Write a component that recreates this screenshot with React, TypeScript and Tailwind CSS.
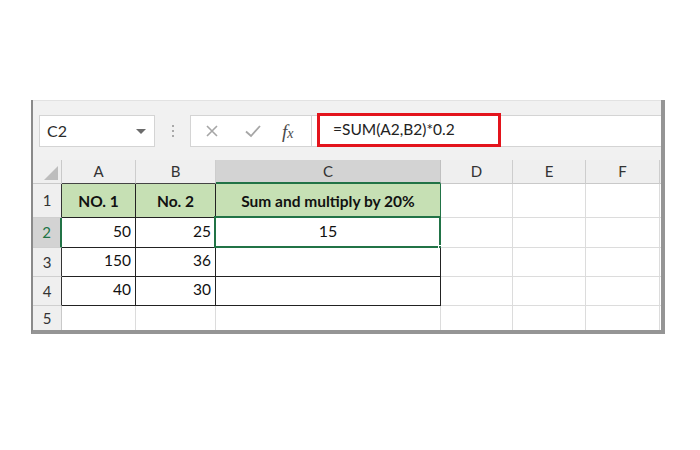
import { ReactNode } from 'react';

const cols = ['A', 'B', 'C', 'D', 'E', 'F'];
const widths = ['w-[74px]', 'w-[80px]', 'w-[225px]', 'w-[72px]', 'w-[73px]', 'w-[74px]'];
const heights = ['h-[34px]', 'h-[30px]', 'h-[29px]', 'h-[29px]', 'h-[25px]'];

type Cell = { text?: string; bold?: boolean; align?: 'left' | 'center' | 'right' };

const data: Cell[][] = [
  [
    { text: 'NO. 1', bold: true, align: 'center' },
    { text: 'No. 2', bold: true, align: 'center' },
    { text: 'Sum and multiply by 20%', bold: true, align: 'center' },
  ],
  [{ text: '50', align: 'right' }, { text: '25', align: 'right' }, { text: '15', align: 'center' }],
  [{ text: '150', align: 'right' }, { text: '36', align: 'right' }, {}],
  [{ text: '40', align: 'right' }, { text: '30', align: 'right' }, {}],
  [{}, {}, {}],
];

function FormulaBar() {
  return (
    <div className="h-[60px] bg-[#f1f1f1] border-t border-[#e2e2e2] flex items-start pt-[14px]">
      {/* Name box */}
      <div className="shrink-0 ml-[6px] w-[116px] h-[32px] bg-white border border-[#d4d4d4] flex items-center justify-between pl-[7px] pr-[8px]">
        <span className="text-[16px] text-[#2b2b2b]">C2</span>
        <span className="w-0 h-0 border-l-[5px] border-r-[5px] border-t-[5px] border-l-transparent border-r-transparent border-t-[#6b6b6b]" />
      </div>
      {/* Grip dots */}
      <div className="shrink-0 w-[35px] h-[32px] flex flex-col items-center justify-center gap-[3px]">
        <span className="w-[2px] h-[2px] bg-[#a9a9a9]" />
        <span className="w-[2px] h-[2px] bg-[#a9a9a9]" />
        <span className="w-[2px] h-[2px] bg-[#a9a9a9]" />
      </div>
      {/* Cancel / enter / fx */}
      <div className="shrink-0 w-[122px] h-[32px] bg-white border border-[#d4d4d4] flex items-center">
        <svg width="16" height="16" viewBox="0 0 16 16" className="ml-[13px]">
          <path d="M3 3 L13 13 M13 3 L3 13" stroke="#a6a6a6" strokeWidth="1.6" />
        </svg>
        <svg width="18" height="16" viewBox="0 0 18 16" className="ml-[24px]">
          <path d="M2 8.5 L7 13 L16 3" stroke="#a6a6a6" strokeWidth="1.8" fill="none" />
        </svg>
        <span
          className="ml-[20px] text-[19px] italic text-[#4a4a4a] leading-none"
          style={{ fontFamily: '"Liberation Serif", serif' }}
        >
          f<span className="text-[14px]">x</span>
        </span>
      </div>
      {/* Formula input */}
      <div className="flex-1 h-[32px] bg-white border-y border-[#d4d4d4]">
        <div className="ml-[5px] -mt-[3px] w-[184px] h-[34px] border-[3px] border-[#e3141c] flex items-center pl-[13px]">
          <span className="text-[15.5px] text-[#222]">=SUM(A2,B2)*0.2</span>
        </div>
      </div>
    </div>
  );
}

function HeaderRow() {
  return (
    <div className="flex h-[24px]">
      <div className="w-[29px] bg-[#efefef] border-r border-b border-[#c9c9c9] flex items-end justify-end pr-[3px] pb-[3px]">
        <svg width="14" height="14" viewBox="0 0 14 14">
          <path d="M14 0 L14 14 L0 14 Z" fill="#bdbdbd" />
        </svg>
      </div>
      {cols.map((c, i) => {
        const sel = c === 'C';
        const dark = c === 'A' || c === 'B';
        return (
          <div
            key={c}
            className={`${widths[i]} flex items-center justify-center text-[15px] text-[#333] border-r ${
              sel
                ? 'bg-[#d3d3d3] border-r-[#c0c0c0] border-b-2 border-b-[#217346]'
                : `bg-[#efefef] border-r-[#cdcdcd] border-b ${dark ? 'border-b-[#444]' : 'border-b-[#c9c9c9]'}`
            }`}
          >
            {c}
          </div>
        );
      })}
      <div className="flex-1 bg-[#efefef] border-b border-[#c9c9c9]" />
    </div>
  );
}

function DataCell({ cell, col, row }: { cell: Cell; col: number; row: number }) {
  const inRange = col < 3 && row < 4;
  const isC1 = col === 2 && row === 0;
  const isC2 = col === 2 && row === 1;
  const fill = row === 0 && col < 3 ? 'bg-[#c6e0b4]' : 'bg-white';
  const borderR = isC1
    ? 'border-r-[#217346]'
    : inRange
    ? 'border-r-[#222]'
    : 'border-r-[#dcdcdc]';
  const borderB = inRange ? 'border-b-[#222]' : 'border-b-[#dcdcdc]';
  const justify =
    cell.align === 'right' ? 'justify-end pr-[4px]' : cell.align === 'center' ? 'justify-center' : 'justify-start';
  const content: ReactNode = cell.text;
  return (
    <div
      className={`${widths[col]} relative flex items-end pb-[4px] border-r border-b ${borderR} ${borderB} ${fill} ${justify} ${
        cell.bold ? 'font-bold' : ''
      } ${isC2 ? 'text-[16px]' : 'text-[15.5px]'} text-[#111]`}
    >
      {content}
      {isC2 && (
        <>
          <span className="absolute -left-[2px] -top-[2px] -right-[1px] -bottom-[1px] border-2 border-[#217346]" />
          <span className="absolute -right-[4px] -bottom-[4px] w-[6px] h-[6px] bg-[#217346] border border-white" />
        </>
      )}
    </div>
  );
}

function Rows() {
  return (
    <div className="flex flex-col">
      {data.map((row, r) => {
        const sel = r === 1;
        const inRange = r < 4;
        return (
          <div key={r} className={`flex ${heights[r]}`}>
            <div
              className={`w-[29px] flex items-center justify-center text-[15px] border-b border-b-[#cfcfcf] ${
                sel
                  ? 'bg-[#d3d3d3] text-[#217346] border-r-2 border-r-[#217346]'
                  : `bg-[#efefef] text-[#333] border-r ${inRange ? 'border-r-[#333]' : 'border-r-[#c9c9c9]'}`
              }`}
            >
              {r + 1}
            </div>
            {cols.map((_, c) => (
              <DataCell key={c} cell={row[c] ?? {}} col={c} row={r} />
            ))}
            <div className="flex-1 bg-white border-b border-[#dcdcdc]" />
          </div>
        );
      })}
    </div>
  );
}

export default function App() {
  return (
    <div className="w-[700px] h-[450px] bg-white relative" style={{ fontFamily: 'Lato, "Liberation Sans", sans-serif' }}>
      <div className="pt-[100px] pl-[31px]">
        <div className="w-[634px] h-[234px] border-l-2 border-l-[#8a8a8a] border-r-4 border-r-[#959595] border-b-4 border-b-[#959595] bg-white overflow-hidden">
          <FormulaBar />
          <HeaderRow />
          <Rows />
        </div>
      </div>
    </div>
  );
}
